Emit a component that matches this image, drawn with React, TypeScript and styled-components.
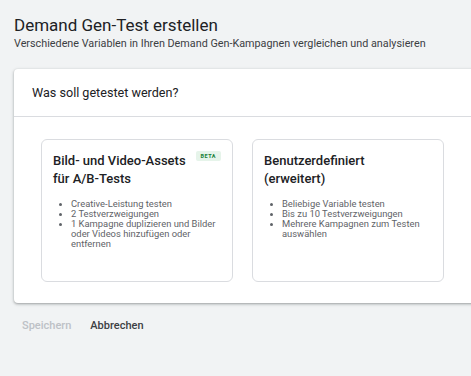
import React from 'react';
import styled, { createGlobalStyle } from 'styled-components';

const GlobalStyle = createGlobalStyle`
  html, body {
    margin: 0;
    padding: 0;
    background: #f1f3f4;
    overflow: hidden;
  }
  body {
    font-family: Roboto, "Liberation Sans", sans-serif;
  }
`;

interface Option {
  title: string;
  beta?: boolean;
  items: string[];
}

const options: Option[] = [
  {
    title: 'Bild- und Video-Assets für A/B-Tests',
    beta: true,
    items: [
      'Creative-Leistung testen',
      '2 Testverzweigungen',
      '1 Kampagne duplizieren und Bilder oder Videos hinzufügen oder entfernen',
    ],
  },
  {
    title: 'Benutzerdefiniert (erweitert)',
    items: ['Beliebige Variable testen', 'Bis zu 10 Testverzweigungen', 'Mehrere Kampagnen zum Testen auswählen'],
  },
];

export default function App() {
  return (
    <>
      <GlobalStyle />
      <Page>
        <Title>Demand Gen-Test erstellen</Title>
        <Subtitle>Verschiedene Variablen in Ihren Demand Gen-Kampagnen vergleichen und analysieren</Subtitle>
        <Panel>
          <PanelHeader>Was soll getestet werden?</PanelHeader>
          <CardRow>
            {options.map((option) => (
              <Card key={option.title}>
                <CardHead>
                  <CardTitle>{option.title}</CardTitle>
                  {option.beta && <Badge>BETA</Badge>}
                </CardHead>
                <List>
                  {option.items.map((item) => (
                    <li key={item}>{item}</li>
                  ))}
                </List>
              </Card>
            ))}
          </CardRow>
        </Panel>
        <Actions>
          <ActionButton disabled>Speichern</ActionButton>
          <ActionButton>Abbrechen</ActionButton>
        </Actions>
      </Page>
    </>
  );
}

const Page = styled.main`
  padding: 14px 0 0 14px;
`;

const Title = styled.h1`
  margin: 0;

  font-size: 17px;
  font-weight: 400;
  line-height: 22px;

  color: #202124;
`;

const Subtitle = styled.p`
  margin: 0;

  font-size: 10.8px;
  line-height: 16px;

  color: #3c4043;
`;

const Panel = styled.section`
  width: 480px;
  margin-top: 17px;

  background: #fff;
  border-radius: 4px;
  box-shadow: 0 1px 2px rgba(60, 64, 67, 0.3), 0 1px 3px 1px rgba(60, 64, 67, 0.15);
`;

const PanelHeader = styled.h2`
  margin: 0;
  padding: 0 18px;
  height: 47px;

  display: flex;
  align-items: center;

  font-size: 12.6px;
  font-weight: 400;

  color: #202124;
  border-bottom: 1px solid #dadce0;
`;

const CardRow = styled.div`
  display: flex;
  gap: 19px;

  padding: 22px 27px 21px;
`;

const Card = styled.article`
  box-sizing: border-box;
  width: 192px;
  height: 143px;
  padding: 12px 11px;

  border: 1px solid #dadce0;
  border-radius: 6px;
`;

const CardHead = styled.div`
  display: flex;
  justify-content: space-between;
  align-items: flex-start;
  gap: 8px;
`;

const CardTitle = styled.h3`
  margin: 0;
  max-width: 145px;

  font-size: 13px;
  font-weight: 500;
  line-height: 18px;

  color: #202124;
`;

const Badge = styled.span`
  flex-shrink: 0;
  margin-top: -1px;
  padding: 0 5px;
  height: 10px;

  display: flex;
  align-items: center;

  font-size: 5.5px;
  font-weight: 700;
  letter-spacing: 0.5px;

  color: #188038;
  background: #e6f4ea;
  border-radius: 2px;
`;

const List = styled.ul`
  margin: 11px 0 0;
  padding-left: 18px;

  font-size: 9.4px;
  line-height: 10px;

  color: #5f6368;

  li::marker {
    font-size: 9px;
  }
`;

const Actions = styled.div`
  display: flex;
  gap: 19px;

  padding: 15px 8px;
`;

const ActionButton = styled.button`
  padding: 0;

  font-family: Roboto, "Liberation Sans", sans-serif;
  font-size: 11px;
  font-weight: 500;
  line-height: 16px;

  color: #3c4043;
  background: none;
  border: none;

  &:disabled {
    color: #bdc1c6;
  }
`;
